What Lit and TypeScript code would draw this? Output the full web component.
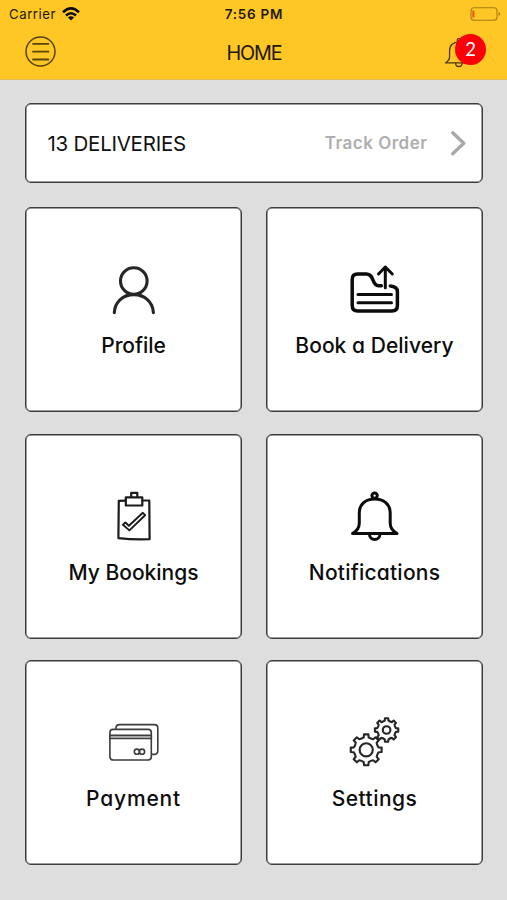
import { LitElement, html, svg, css } from "lit";
import { customElement } from "lit/decorators.js";

/** Outline of a cog with flat teeth, centred on (cx, cy). */
function cog(cx: number, cy: number, outer: number, root: number, teeth = 8): string {
  const step = (Math.PI * 2) / teeth;
  const at = (r: number, a: number) =>
    `${(cx + r * Math.sin(a)).toFixed(2)} ${(cy - r * Math.cos(a)).toFixed(2)}`;
  let d = "";
  for (let i = 0; i < teeth; i++) {
    const a = i * step;
    d += `${i ? "L" : "M"}${at(root, a - step * 0.25)}L${at(outer, a - step * 0.18)}L${at(outer, a + step * 0.18)}L${at(root, a + step * 0.25)}`;
    d += `Q${at(root * 0.93, a + step * 0.5)} ${at(root, a + step * 0.75)}`;
  }
  return d + "Z";
}

const bell = svg`
  <circle cx="24.6" cy="3.6" r="2.7"/>
  <path d="M2.5 41.6H47C42.5 39 40.2 36 40.2 31V21C40.2 12 33.5 6.9 24.7 6.9S9.3 12 9.3 21V31C9.3 36 7 39 2.5 41.6Z"/>
  <path d="M19.4 42C19.6 49.3 29.8 49.3 30 42"/>`;

const icons = {
  profile: svg`<g stroke="#262626" stroke-width="3.1">
    <circle cx="24.8" cy="16" r="13.3"/>
    <path d="M5.3 47.6C5.8 37 14 29.6 24.8 29.6S43.8 37 44.4 47.6"/></g>`,
  book: svg`<g stroke-width="3.5">
    <path d="M31.3 20.7H28.5C21.5 20.7 24.5 9 16.5 9H7.5Q2.2 9 2.2 14.5V40.5Q2.2 46 7.7 46H42Q47.4 46 47.4 40.5V26.5Q47.4 21.4 40.3 20.9"/>
    <path stroke-width="3" d="M35.3 22.7V2M28.5 9L35.3 2L42.3 9M8 29.4H41.5M8 37.7H41.5"/></g>`,
  clipboard: svg`<g stroke="#1c1c1c" stroke-width="2.2">
    <path d="M16.8 8.6L9.8 8.8L9.4 46.1Q24 47.8 40.6 47.2L40.3 8.5H33.3"/>
    <path d="M16.8 5.4H22.2V.9H28.3V5.4H33.3V13.5H16.8ZM22.2 5.4H28.3"/>
    <path stroke-width="1.9" d="M13.9 32.8L16.4 30.5L19.9 33.8L33.8 20.8L36.1 23.2L20.4 38.4Z"/></g>`,
  bell: svg`<g stroke-width="3">${bell}</g>`,
  cards: svg`<g stroke="#3c3c3c" stroke-width="1.6">
    <path d="M7 11V10Q7 6.6 10.5 6.6H45.2Q48.8 6.6 48.8 10V32.8Q48.8 36.4 45.2 36.4H42.5"/>
    <rect x=".9" y="11.4" width="41.4" height="30.6" rx="3.2" fill="#fff"/>
    <path fill="#ccc" d="M.9 17.4H42.3V20.5H.9Z"/>
    <circle cx="27.9" cy="33.7" r="2.6"/><circle cx="33" cy="33.7" r="2.6"/></g>`,
  gears: svg`<g stroke="#262626" stroke-width="2.1">
    <path d="${cog(16.2, 31.8, 15.6, 12.6)}"/><circle cx="16.2" cy="31.8" r="6.6"/>
    <path d="${cog(36.6, 12, 11.8, 9.5)}"/><circle cx="36.6" cy="12" r="3.8"/></g>`,
};

const tiles = [
  { label: "Profile", icon: icons.profile, tracking: -0.05 },
  { label: "Book a Delivery", icon: icons.book, tracking: 0.04 },
  { label: "My Bookings", icon: icons.clipboard, tracking: 0 },
  { label: "Notifications", icon: icons.bell, tracking: 0.22 },
  { label: "Payment", icon: icons.cards, tracking: 0.85 },
  { label: "Settings", icon: icons.gears, tracking: 0.45 },
];

@customElement("app-root")
export class AppRoot extends LitElement {
  static styles = css`
    :host { display: block; height: 900px; overflow: hidden; background: #dedede; color: #111; font-family: Inter, "Liberation Sans", sans-serif; }
    * { box-sizing: border-box; }
    svg { display: block; fill: none; stroke: #0c0c0c; stroke-linecap: round; stroke-linejoin: round; overflow: visible; }
    .header { height: 80px; background: #fec726; border-bottom: 1px solid #dfbe57; }
    .status { height: 27px; display: grid; grid-template-columns: 1fr auto 1fr; align-items: center; padding: 0 6px 0 9px; font-size: 13px; line-height: 26px; color: #1d1805; }
    .carrier { display: flex; align-items: center; gap: 6px; letter-spacing: .55px; font-size: 13.2px; }
    .time { font-weight: 600; font-size: 13.5px; letter-spacing: .75px; margin-right: 2px; }
    .battery { justify-self: end; }
    .nav { height: 49px; display: grid; grid-template-columns: 1fr auto 1fr; align-items: center; padding: 0 21px 0 25px; }
    .title { font-size: 19.8px; letter-spacing: -1.1px; line-height: 30px; margin: 3px 3px 0 0; color: #1d1805; }
    .alerts { position: relative; justify-self: end; width: 42px; height: 36px; }
    .alerts svg { margin-top: 4px; }
    .badge { position: absolute; right: 0; top: 0; width: 31px; height: 31px; border-radius: 50%; background: #fb0006; color: #fff; font-family: Lato, sans-serif; font-size: 18.5px; line-height: 31px; text-align: center; }
    .content { padding: 23px 24px 0 25px; }
    .card { background: #fff; border: 1px solid #3c3c3c; box-shadow: inset 0 0 0 .5px #3c3c3c; border-radius: 6px; }
    .summary { height: 80px; display: flex; align-items: center; padding: 0 16px 0 21.5px; margin-bottom: 24px; }
    .count { font-size: 20.5px; letter-spacing: -.25px; flex: 1; padding-top: 1px; }
    .track { font-size: 17px; font-weight: 600; letter-spacing: .5px; color: #afafaf; margin-right: 23.5px; }
    .grid { display: grid; grid-template-columns: 217px 217px; grid-auto-rows: 205px; gap: 21.5px 24px; }
    .tile { display: flex; flex-direction: column; align-items: center; padding-top: 57px; }
    .label { margin-top: 16px; font-size: 21px; line-height: 30px; font-weight: 500; color: #0c0c0c; white-space: nowrap; font-feature-settings: "cv11"; }
  `;

  render() {
    return html`
      <div class="header">
        <div class="status">
          <div class="carrier">
            <span>Carrier</span>
            <svg width="18" height="14" viewBox="0 0 18 14" stroke-width="2.6">
              <path stroke-linecap="butt" d="M1 5.2Q9 -2.4 17 5.2M4 8.5Q9 4 14 8.5"/>
              <path fill="#111" stroke="none" d="M9 13.6L5.9 10.6Q9 8.1 12.1 10.6Z"/>
            </svg>
          </div>
          <div class="time">7:56 PM</div>
          <svg class="battery" width="31" height="14" viewBox="0 0 31 14">
            <rect x="1" y=".7" width="26" height="12.6" rx="3" stroke="#a47c16" stroke-width="1.1"/>
            <path d="M28.6 4.8Q31.8 7 28.6 9.2Z" fill="#a47c16" stroke="none"/>
            <path d="M3.4 3.5V10.5" stroke="#fb4a16" stroke-width="2" stroke-linecap="butt"/>
          </svg>
        </div>
        <div class="nav">
          <svg width="31" height="31" viewBox="0 0 31 31">
            <g stroke="#57430c" stroke-width="1.5"><circle cx="15.5" cy="15.5" r="14.5"/>
            <path stroke-width="1.8" d="M8 7.8H23.4M8 15.7H23.4M8 23.5H23.4"/></g>
          </svg>
          <div class="title">HOME</div>
          <div class="alerts">
            <svg width="30" height="30" viewBox="0 0 50 50"><g stroke="#4c390c" stroke-width="2.2">${bell}</g></svg>
            <span class="badge">2</span>
          </div>
        </div>
      </div>
      <div class="content">
        <div class="card summary">
          <span class="count">13 DELIVERIES</span>
          <span class="track">Track Order</span>
          <svg width="15" height="26" viewBox="0 0 15 26"><path stroke="#a8a8a8" stroke-width="3.4" d="M1.7 2.8L12.8 13.3L1.7 23.8"/></svg>
        </div>
        <div class="grid">
          ${tiles.map(
            (t) => html`<div class="card tile">
              <svg width="50" height="50" viewBox="0 0 50 50">${t.icon}</svg>
              <div class="label" style="letter-spacing:${t.tracking}px">${t.label}</div>
            </div>`
          )}
        </div>
      </div>
    `;
  }
}
